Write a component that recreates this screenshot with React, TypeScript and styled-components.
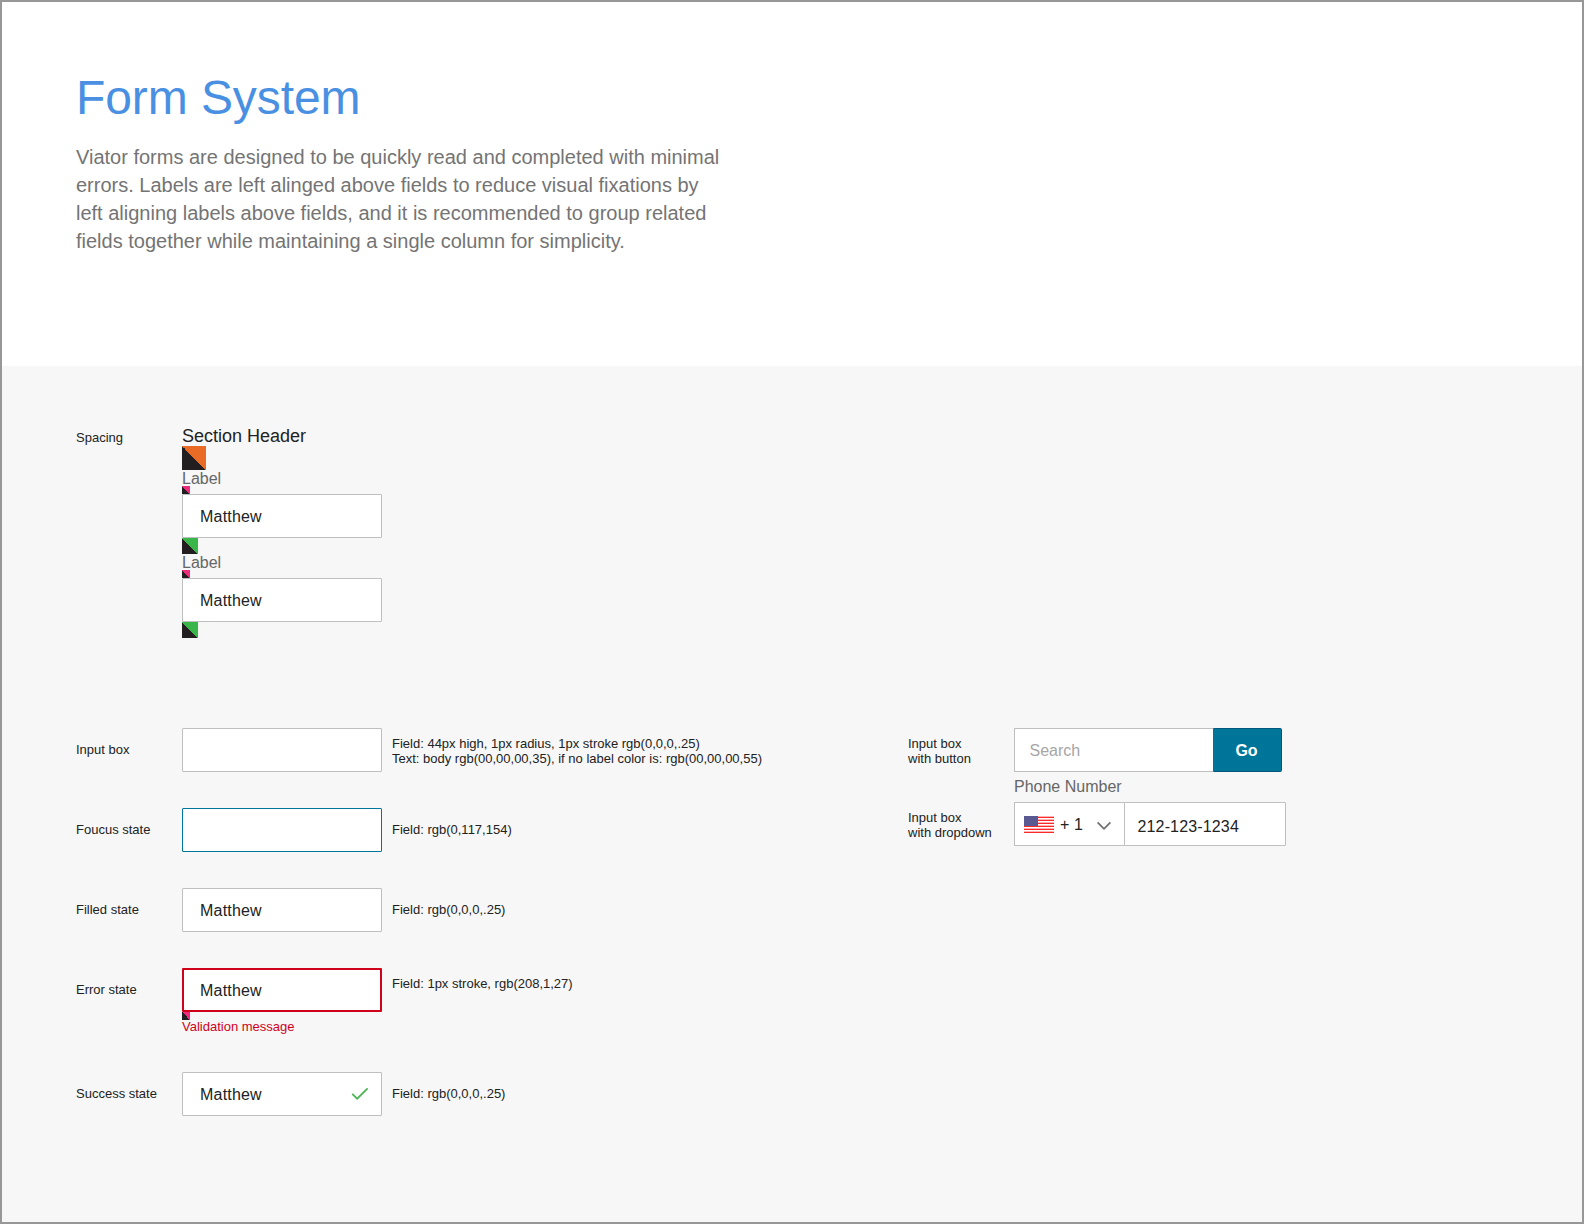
import React from "react";
import styled, { createGlobalStyle } from "styled-components";

const GlobalStyle = createGlobalStyle`
  *, *::before, *::after { box-sizing: border-box; }
  html, body { margin: 0; padding: 0; }
  body { font-family: "Liberation Sans", Arial, Helvetica, sans-serif; color: #222; }
  h1, h2, p { margin: 0; font-weight: 400; }
  input, button { font-family: inherit; }
`;

const Page = styled.div`
  width: 1584px;
  height: 1224px;
  display: flex;
  flex-direction: column;
  border: 2px solid #979797;
  background: #f7f7f7;
  overflow: hidden;
`;

const Header = styled.header`
  height: 364px;
  flex: none;
  padding: 68px 74px 0;
  background: #fff;
`;

const Title = styled.h1`
  font-size: 48px;
  line-height: 56px;
  letter-spacing: -0.08px;
  color: #4a90e2;
`;

const Intro = styled.p`
  margin-top: 17px;
  font-size: 20px;
  line-height: 28px;
  color: #747474;
  white-space: nowrap;
`;

const Body = styled.main`
  display: flex;
  align-items: flex-start;
  padding: 0 74px;
`;

const Column = styled.section<{ $width?: number; $top: number }>`
  display: flex;
  flex-direction: column;
  width: ${(p) => (p.$width ? `${p.$width}px` : "auto")};
  padding-top: ${(p) => p.$top}px;
`;

const Row = styled.div<{ $height: number }>`
  display: flex;
  align-items: flex-start;
  height: ${(p) => p.$height}px;
`;

const Caption = styled.div<{ $top: number }>`
  flex: none;
  width: 106px;
  padding-top: ${(p) => p.$top}px;
  font-size: 13px;
  line-height: 15px;
  white-space: pre;
`;

const Note = styled(Caption)`
  width: auto;
  margin-left: 10px;
`;

const Stack = styled.div`
  display: flex;
  flex-direction: column;
  align-items: flex-start;
`;

const SectionHeader = styled.h2`
  height: 22px;
  font-size: 18px;
  line-height: 24px;
`;

const Label = styled.label<{ $height?: number }>`
  height: ${(p) => p.$height ?? 16}px;
  font-size: 16px;
  line-height: 18px;
  color: #666;
`;

const Marker = styled.div<{ $size: number; $color: string }>`
  width: ${(p) => p.$size}px;
  height: ${(p) => p.$size}px;
  background: linear-gradient(to top right, #231f20 50%, ${(p) => p.$color} 50%);
`;

const Field = styled.div<{ $border?: string; $thick?: boolean; $width?: number }>`
  flex: none;
  display: flex;
  align-items: center;
  justify-content: space-between;
  width: ${(p) => p.$width ?? 200}px;
  height: 44px;
  padding: 1px ${(p) => (p.$thick ? 11 : 12)}px 0 ${(p) => (p.$thick ? 16 : 17)}px;
  border: ${(p) => (p.$thick ? 2 : 1)}px solid ${(p) => p.$border ?? "#bfbfbf"};
  border-radius: 1px;
  background: #fff;
  font-size: 16px;
  letter-spacing: 0.2px;
`;

const SearchField = styled(Field)`
  padding-left: 14.5px;
  border-right: 0;
  border-radius: 1px 0 0 1px;
  color: #a6a6a6;
  letter-spacing: 0;
`;

const GoButton = styled.button`
  width: 69px;
  height: 44px;
  padding: 2px 2px 0 0;
  border: 1px solid #00587a;
  border-left-color: #00759a;
  border-radius: 0 2px 2px 0;
  background: #00759a;
  color: #fff;
  font-size: 16px;
  font-weight: 700;
`;

const CountrySelect = styled(Field)`
  justify-content: flex-start;
  padding: 0 0 0 9px;
  border-right: 0;
  border-radius: 1px 0 0 1px;
  letter-spacing: 0.1px;
`;

const DialCode = styled.span`
  width: 42px;
  padding: 2px 0 0 6px;
`;

const PhoneField = styled(Field)`
  padding: 5px 0 0 12.5px;
  border-radius: 0 1px 1px 0;
  letter-spacing: 0.15px;
`;

const Inline = styled.div`
  display: flex;
`;

const ErrorText = styled.p`
  font-size: 13px;
  line-height: 14px;
  color: #d0011b;
`;

const CheckIcon = styled.svg`
  margin-bottom: 1px;
`;

const ChevronIcon = styled.svg`
  margin: 3px 0 0 1px;
`;

const PINK = "#ee2a7b";
const GREEN = "#39b54a";
const ORANGE = "#e96b25";

const Check = () => (
  <CheckIcon width="18" height="14" viewBox="0 0 18 14" fill="none">
    <path d="M1.2 6.8 6.2 11.7 16.6 1.4" stroke="#4db551" strokeWidth="1.8" />
  </CheckIcon>
);

const Chevron = () => (
  <ChevronIcon width="14" height="10" viewBox="0 0 14 10" fill="none">
    <path d="M.6 1.4 7 7.8 13.4 1.4" stroke="#717171" strokeWidth="1.8" />
  </ChevronIcon>
);

const Flag = () => (
  <svg width="30" height="17" viewBox="0 0 30 17" shapeRendering="crispEdges">
    <rect width="30" height="17" fill="#fff" />
    {[0, 3, 6, 9, 12, 15].map((y) => (
      <g key={y}>
        <rect y={y} width="30" height="1" fill="#ffb4b4" />
        <rect y={y + 1} width="30" height="1" fill="#fa2a2a" />
      </g>
    ))}
    <rect width="14" height="10" fill="#5a5a92" />
  </svg>
);

const LabelledField = () => (
  <>
    <Label>Label</Label>
    <Marker $size={8} $color={PINK} />
    <Field>Matthew</Field>
    <Marker $size={16} $color={GREEN} />
  </>
);

export default function App() {
  return (
    <>
      <GlobalStyle />
      <Page>
        <Header>
          <Title>Form System</Title>
          <Intro>
            Viator forms are designed to be quickly read and completed with minimal
            <br />
            errors. Labels are left alinged above fields to reduce visual fixations by
            <br />
            left aligning labels above fields, and it is recommended to group related
            <br />
            fields together while maintaining a single column for simplicity.
          </Intro>
        </Header>
        <Body>
          <Column $width={832} $top={58}>
            <Row $height={304}>
              <Caption $top={6}>Spacing</Caption>
              <Stack>
                <SectionHeader>Section Header</SectionHeader>
                <Marker $size={24} $color={ORANGE} />
                <LabelledField />
                <LabelledField />
              </Stack>
            </Row>
            <Row $height={80}>
              <Caption $top={14}>Input box</Caption>
              <Field />
              <Note $top={8}>
                {"Field: 44px high, 1px radius, 1px stroke rgb(0,0,0,.25)\nText: body rgb(00,00,00,35), if no label color is: rgb(00,00,00,55)"}
              </Note>
            </Row>
            <Row $height={80}>
              <Caption $top={14}>Foucus state</Caption>
              <Field $border="#00759a" />
              <Note $top={14}>Field: rgb(0,117,154)</Note>
            </Row>
            <Row $height={80}>
              <Caption $top={14}>Filled state</Caption>
              <Field>Matthew</Field>
              <Note $top={14}>Field: rgb(0,0,0,.25)</Note>
            </Row>
            <Row $height={104}>
              <Caption $top={14}>Error state</Caption>
              <Stack>
                <Field $border="#d0011b" $thick>
                  Matthew
                </Field>
                <Marker $size={8} $color={PINK} />
                <ErrorText>Validation message</ErrorText>
              </Stack>
              <Note $top={8}>Field: 1px stroke, rgb(208,1,27)</Note>
            </Row>
            <Row $height={44}>
              <Caption $top={14}>Success state</Caption>
              <Field>
                Matthew
                <Check />
              </Field>
              <Note $top={14}>Field: rgb(0,0,0,.25)</Note>
            </Row>
          </Column>
          <Column $top={362}>
            <Row $height={50}>
              <Caption $top={8}>{"Input box\nwith button"}</Caption>
              <SearchField $width={199}>Search</SearchField>
              <GoButton>Go</GoButton>
            </Row>
            <Row $height={68}>
              <Caption $top={32}>{"Input box\nwith dropdown"}</Caption>
              <Stack>
                <Label $height={24}>Phone Number</Label>
                <Inline>
                  <CountrySelect $width={110}>
                    <Flag />
                    <DialCode>+ 1</DialCode>
                    <Chevron />
                  </CountrySelect>
                  <PhoneField $width={162}>212-123-1234</PhoneField>
                </Inline>
              </Stack>
            </Row>
          </Column>
        </Body>
      </Page>
    </>
  );
}
